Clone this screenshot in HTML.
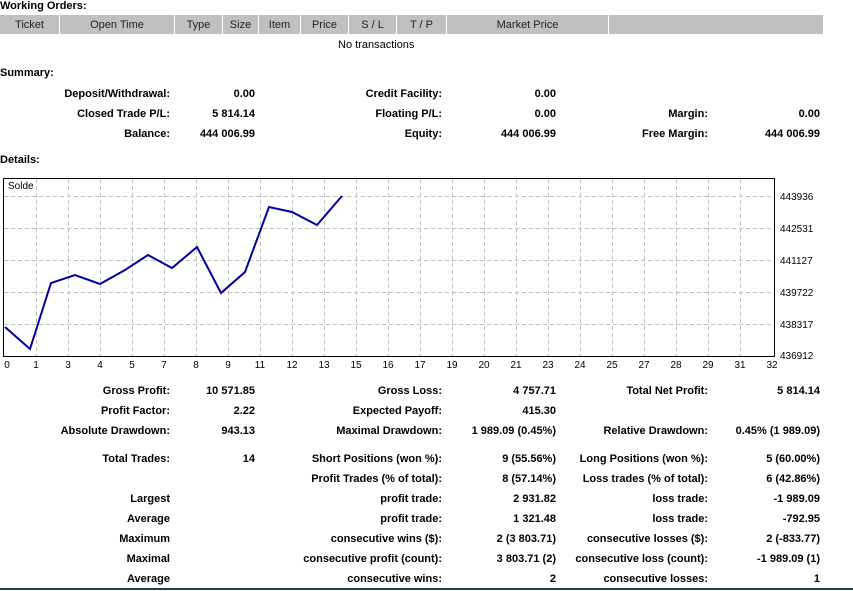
<!DOCTYPE html>
<html><head><meta charset="utf-8"><style>
body{margin:0;width:853px;height:591px;background:#fff;font-family:"Liberation Sans",sans-serif;font-size:11px;color:#000;position:relative;overflow:hidden}
.a{position:absolute;white-space:nowrap;line-height:13px}
.b{font-weight:bold}
.r{text-align:right}
.h{position:absolute;top:15px;height:19px;background:#c0c0c0;line-height:20px;text-align:center;color:#222}
</style></head><body>
<div class="a b" style="left:0;top:0">Working Orders:</div>
<div class="h" style="left:0;width:59px">Ticket</div>
<div class="h" style="left:60px;width:114px">Open Time</div>
<div class="h" style="left:175px;width:47px">Type</div>
<div class="h" style="left:223px;width:35px">Size</div>
<div class="h" style="left:259px;width:41px">Item</div>
<div class="h" style="left:301px;width:47px">Price</div>
<div class="h" style="left:349px;width:47px">S / L</div>
<div class="h" style="left:397px;width:49px">T / P</div>
<div class="h" style="left:447px;width:161px">Market Price</div>
<div class="h" style="left:609px;width:214px"></div>
<div class="a" style="left:338px;top:39px">No transactions</div>
<div class="a b" style="left:0;top:67px">Summary:</div>
<div class="a b" style="left:0;top:154px">Details:</div>
<div id="s"></div>
<svg class="a" style="left:0;top:170px" width="853" height="210">
<g stroke="#c0c0c0" stroke-dasharray="4,3" stroke-width="1">
<line x1="4" x2="775" y1="26.5" y2="26.5"/><line x1="4" x2="775" y1="58.5" y2="58.5"/><line x1="4" x2="775" y1="90.5" y2="90.5"/><line x1="4" x2="775" y1="122.5" y2="122.5"/><line x1="4" x2="775" y1="154.5" y2="154.5"/>
<g id="vl"></g>
</g>
<rect x="3.5" y="8.5" width="771" height="178" fill="none" stroke="#000"/>
<polyline fill="none" stroke="#0000a0" stroke-width="2" points="5,157 30,179 51,113 75,105 100,114 125,100 148,85 172,98 197,77 221,123 245,102 269,37 292,42 317,55 342,26"/>
<text x="8" y="19" font-size="10" font-family="Liberation Sans">Solde</text>
<g font-size="10" font-family="Liberation Sans" id="yl">
<text x="780" y="30">443936</text><text x="780" y="62">442531</text><text x="780" y="94">441127</text><text x="780" y="126">439722</text><text x="780" y="158">438317</text><text x="780" y="189">436912</text>
</g>
<g font-size="10" font-family="Liberation Sans" text-anchor="middle" id="xl"></g>
</svg>
<div style="position:absolute;left:0;top:588px;width:853px;height:2px;background:#2a3a5a"></div>
<script>
var xs=[0,1,3,4,5,7,8,9,11,12,13,15,16,17,19,20,21,23,24,25,27,28,29,31,32];
var vl='',xl='';
xs.forEach(function(v,i){var x=4+32*i;if(i>0&&i<24)vl+='<line x1="'+(x+.5)+'" x2="'+(x+.5)+'" y1="9" y2="186"/>';
xl+='<text x="'+(i==0?7:x)+'" y="198">'+v+'</text>';});
document.getElementById('vl').innerHTML=vl;document.getElementById('xl').innerHTML=xl;
var rows=[
[88,'Deposit/Withdrawal:','0.00','Credit Facility:','0.00','',''],
[108,'Closed Trade P/L:','5 814.14','Floating P/L:','0.00','Margin:','0.00'],
[128,'Balance:','444 006.99','Equity:','444 006.99','Free Margin:','444 006.99'],
[385,'Gross Profit:','10 571.85','Gross Loss:','4 757.71','Total Net Profit:','5 814.14'],
[405,'Profit Factor:','2.22','Expected Payoff:','415.30','',''],
[425,'Absolute Drawdown:','943.13','Maximal Drawdown:','1 989.09 (0.45%)','Relative Drawdown:','0.45% (1 989.09)'],
[453,'Total Trades:','14','Short Positions (won %):','9 (55.56%)','Long Positions (won %):','5 (60.00%)'],
[473,'','','Profit Trades (% of total):','8 (57.14%)','Loss trades (% of total):','6 (42.86%)'],
[493,'Largest','','profit trade:','2 931.82','loss trade:','-1 989.09'],
[513,'Average','','profit trade:','1 321.48','loss trade:','-792.95'],
[533,'Maximum','','consecutive wins ($):','2 (3 803.71)','consecutive losses ($):','2 (-833.77)'],
[553,'Maximal','','consecutive profit (count):','3 803.71 (2)','consecutive loss (count):','-1 989.09 (1)'],
[573,'Average','','consecutive wins:','2','consecutive losses:','1']];
var ends=[170,255,442,556,708,820],h='';
rows.forEach(function(r){for(var k=0;k<6;k++){if(r[k+1])h+='<div class="a b r" style="right:'+(853-ends[k])+'px;top:'+r[0]+'px">'+r[k+1]+'</div>';}});
document.getElementById('s').innerHTML=h;
</script>
</body></html>
